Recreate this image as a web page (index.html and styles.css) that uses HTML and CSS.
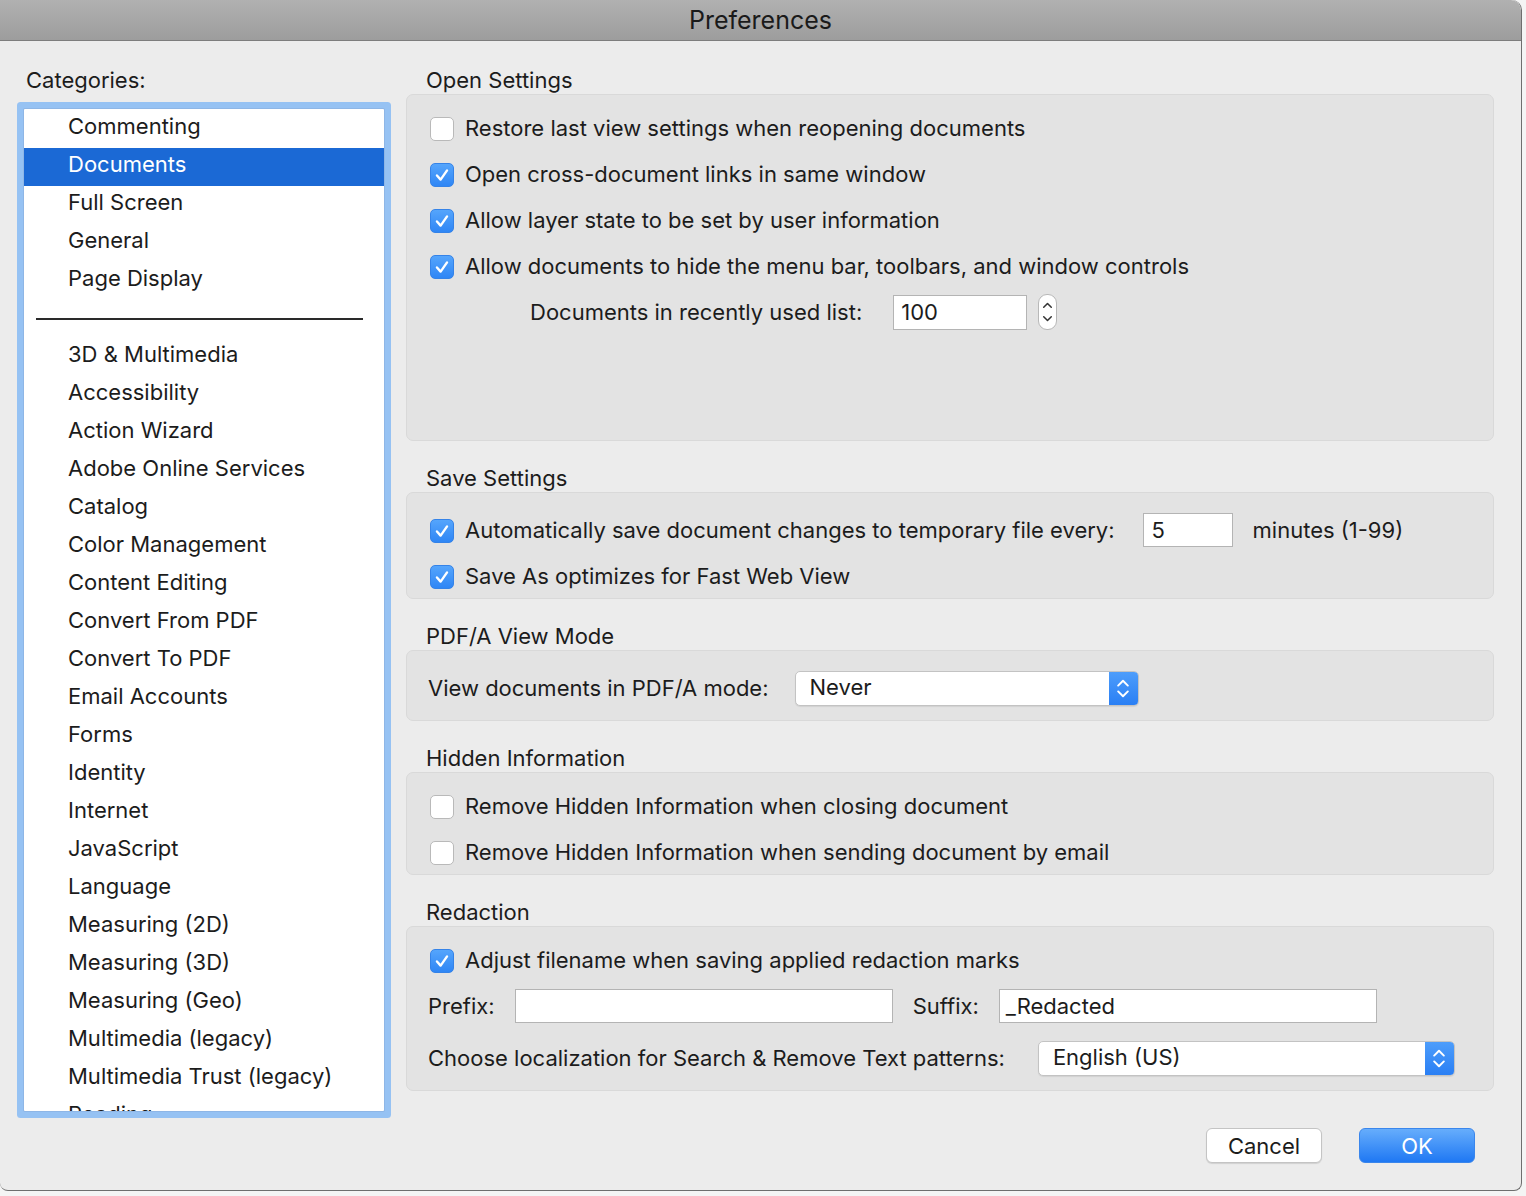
FILE: index.html
```html
<!DOCTYPE html>
<html>
<head>
<meta charset="utf-8">
<link rel="stylesheet" href="styles.css">
</head>
<body>
<div class="window">
  <div class="titlebar">Preferences</div>
  <div class="content">
    <div class="sidebar">
      <div class="label">Categories:</div>
      <div class="list">
        <div class="item">Commenting</div>
        <div class="item selected">Documents</div>
        <div class="item">Full Screen</div>
        <div class="item">General</div>
        <div class="item">Page Display</div>
        <div class="sep"><div class="sep-line"></div></div>
        <div class="item">3D &amp; Multimedia</div>
        <div class="item">Accessibility</div>
        <div class="item">Action Wizard</div>
        <div class="item">Adobe Online Services</div>
        <div class="item">Catalog</div>
        <div class="item">Color Management</div>
        <div class="item">Content Editing</div>
        <div class="item">Convert From PDF</div>
        <div class="item">Convert To PDF</div>
        <div class="item">Email Accounts</div>
        <div class="item">Forms</div>
        <div class="item">Identity</div>
        <div class="item">Internet</div>
        <div class="item">JavaScript</div>
        <div class="item">Language</div>
        <div class="item">Measuring (2D)</div>
        <div class="item">Measuring (3D)</div>
        <div class="item">Measuring (Geo)</div>
        <div class="item">Multimedia (legacy)</div>
        <div class="item">Multimedia Trust (legacy)</div>
        <div class="item">Reading</div>
      </div>
    </div>
    <div class="main">
      <div class="section-title">Open Settings</div>
      <div class="group g-open">
        <div class="row"><span class="cb"></span>Restore last view settings when reopening documents</div>
        <div class="row"><span class="cb on"><svg viewBox="0 0 24 24"><path d="M6.5 12.5l4 4.5 7-10"/></svg></span>Open cross-document links in same window</div>
        <div class="row"><span class="cb on"><svg viewBox="0 0 24 24"><path d="M6.5 12.5l4 4.5 7-10"/></svg></span>Allow layer state to be set by user information</div>
        <div class="row"><span class="cb on"><svg viewBox="0 0 24 24"><path d="M6.5 12.5l4 4.5 7-10"/></svg></span>Allow documents to hide the menu bar, toolbars, and window controls</div>
        <div class="row recent">
          <span class="recent-label">Documents in recently used list:</span>
          <span class="field f-recent">100</span>
          <span class="stepper"><svg viewBox="0 0 18 36"><path d="M5 13l4-4 4 4M5 23l4 4 4-4"/></svg></span>
        </div>
      </div>

      <div class="section-title">Save Settings</div>
      <div class="group g-save">
        <div class="row"><span class="cb on"><svg viewBox="0 0 24 24"><path d="M6.5 12.5l4 4.5 7-10"/></svg></span>Automatically save document changes to temporary file every:<span class="field f-min">5</span><span class="minutes">minutes (1-99)</span></div>
        <div class="row"><span class="cb on"><svg viewBox="0 0 24 24"><path d="M6.5 12.5l4 4.5 7-10"/></svg></span>Save As optimizes for Fast Web View</div>
      </div>

      <div class="section-title">PDF/A View Mode</div>
      <div class="group g-pdfa">
        <div class="row plain">View documents in PDF/A mode:<span class="select s-never"><span class="sel-text">Never</span><span class="sel-arrow"><svg viewBox="0 0 28 34"><path d="M9 14l5-5 5 5M9 20l5 5 5-5"/></svg></span></span></div>
      </div>

      <div class="section-title">Hidden Information</div>
      <div class="group g-hidden">
        <div class="row"><span class="cb"></span>Remove Hidden Information when closing document</div>
        <div class="row"><span class="cb"></span>Remove Hidden Information when sending document by email</div>
      </div>

      <div class="section-title">Redaction</div>
      <div class="group g-red">
        <div class="row"><span class="cb on"><svg viewBox="0 0 24 24"><path d="M6.5 12.5l4 4.5 7-10"/></svg></span>Adjust filename when saving applied redaction marks</div>
        <div class="row plain">Prefix:<span class="field f-prefix"></span><span class="suffix-label">Suffix:</span><span class="field f-suffix">_Redacted</span></div>
        <div class="row plain tall">Choose localization for Search &amp; Remove Text patterns:<span class="select s-lang"><span class="sel-text">English (US)</span><span class="sel-arrow"><svg viewBox="0 0 28 34"><path d="M9 14l5-5 5 5M9 20l5 5 5-5"/></svg></span></span></div>
      </div>

      <div class="buttons">
        <span class="btn cancel">Cancel</span>
        <span class="btn ok">OK</span>
      </div>
    </div>
  </div>
</div>
</body>
</html>
```
FILE: styles.css
```css
html, body {
  margin: 0;
  padding: 0;
}
body {
  background: #f4f4f4;
  font-family: Inter, "Liberation Sans", sans-serif;
  font-size: 22px;
  color: #1c1c1c;
  width: 1526px;
  height: 1196px;
  overflow: hidden;
}
.window {
  width: 1522px;
  height: 1191px;
  background: #ececec;
  border-right: 1px solid #6e6e6e;
  border-bottom: 1px solid #6e6e6e;
  border-radius: 0 10px 8px 8px;
  box-sizing: border-box;
  overflow: hidden;
}
.titlebar {
  height: 41px;
  line-height: 41px;
  text-align: center;
  font-size: 25px;
  color: #1a1a1a;
  background: linear-gradient(#b1b1b1, #9d9d9d);
  border-bottom: 1px solid #7d7d7d;
  box-sizing: border-box;
  border-radius: 0 10px 0 0;
}
.content {
  display: flex;
  padding: 25px 0 0 24px;
}
.sidebar {
  width: 360px;
}
.label {
  height: 28px;
  line-height: 28px;
  margin-left: 2px;
}
.list {
  margin-top: 15px;
  height: 1002px;
  background: #fff;
  box-shadow: 0 0 0 1px #8eb6e6, 0 0 0 7px #96c2f3;
  border-radius: 1px;
  overflow: hidden;
  padding-top: 1px;
  box-sizing: border-box;
}
.item {
  height: 38px;
  line-height: 33px;
  padding-left: 44px;
  white-space: nowrap;
}
.item.selected {
  background: #1b69d5;
  color: #fff;
}
.sep {
  height: 38px;
  padding-top: 18px;
  box-sizing: border-box;
}
.sep-line {
  margin-left: 12px;
  width: 327px;
  height: 2px;
  background: #2a2a2a;
}
.main {
  margin-left: 22px;
  width: 1088px;
}
.section-title {
  height: 28px;
  line-height: 28px;
  padding-left: 20px;
  margin-top: 23px;
}
.main > .section-title:first-child {
  margin-top: 0;
}
.group {
  background: #e3e3e3;
  border: 1px solid #d9d9d9;
  border-radius: 7px;
  box-sizing: border-box;
  padding-left: 23px;
}
.g-open { height: 347px; padding-top: 10px; }
.g-save { height: 107px; padding-top: 14px; }
.g-pdfa { height: 71px; padding-top: 14px; }
.g-hidden { height: 103px; padding-top: 10px; }
.g-red { height: 165px; padding-top: 10px; }
.row {
  height: 46px;
  display: flex;
  align-items: center;
  white-space: nowrap;
}
.row.plain {
  margin-left: -2px;
}
.row.tall {
  height: 58px;
}
.cb {
  width: 24px;
  height: 24px;
  border-radius: 5px;
  box-sizing: border-box;
  background: #fff;
  border: 1px solid #b9b9b9;
  margin-right: 11px;
  flex: none;
  display: flex;
  position: relative;
  top: 1px;
}
.cb.on {
  background: linear-gradient(#55a5fc, #2f86f5);
  border: 1px solid #3583e8;
}
.cb svg {
  width: 22px;
  height: 22px;
  fill: none;
  stroke: #fff;
  stroke-width: 2.6;
  stroke-linecap: round;
  stroke-linejoin: round;
}
.recent-label {
  margin-left: 100px;
}
.field {
  background: #fff;
  border: 1px solid #b4b4b4;
  box-sizing: border-box;
  height: 35px;
  line-height: 33px;
  padding-left: 7px;
  display: inline-block;
}
.f-recent {
  width: 134px;
  margin-left: 31px;
}
.stepper {
  width: 19px;
  height: 36px;
  margin-left: 11px;
  background: #fff;
  border: 1px solid #b8b8b8;
  border-radius: 9px;
  box-sizing: border-box;
  display: flex;
}
.stepper svg {
  width: 17px;
  height: 34px;
  fill: none;
  stroke: #333;
  stroke-width: 1.6;
  stroke-linecap: round;
  stroke-linejoin: round;
}
.f-min {
  width: 90px;
  height: 34px;
  margin-left: 28px;
  padding-left: 8px;
}
.minutes {
  margin-left: 20px;
}
.select {
  display: flex;
  height: 35px;
  background: #fff;
  border: 1px solid #c3c3c3;
  border-radius: 5px;
  box-sizing: border-box;
  overflow: hidden;
  box-shadow: 0 1px 1px rgba(0,0,0,0.08);
}
.sel-text {
  flex: 1;
  padding-left: 14px;
  line-height: 31px;
}
.sel-arrow {
  width: 29px;
  background: linear-gradient(#4d9dfb, #2a7ff4);
  display: flex;
}
.sel-arrow svg {
  width: 28px;
  height: 33px;
  fill: none;
  stroke: #fff;
  stroke-width: 2;
  stroke-linecap: round;
  stroke-linejoin: round;
}
.s-never {
  width: 344px;
  margin-left: 26px;
}
.s-lang {
  width: 417px;
  margin-left: 33px;
}
.f-prefix {
  width: 378px;
  height: 34px;
  margin-left: 20px;
}
.suffix-label {
  margin-left: 20px;
}
.f-suffix {
  width: 378px;
  height: 34px;
  margin-left: 20px;
  padding-left: 6px;
}
.buttons {
  display: flex;
  justify-content: flex-end;
  gap: 37px;
  margin-top: 37px;
  padding-right: 19px;
}
.btn {
  width: 116px;
  height: 35px;
  line-height: 34px;
  text-align: center;
  border-radius: 6px;
  box-sizing: border-box;
}
.cancel {
  background: #fff;
  border: 1px solid #c4c4c4;
  box-shadow: 0 1px 1px rgba(0,0,0,0.12);
}
.ok {
  background: linear-gradient(#66adfc, #1f78f3);
  color: #fff;
  border: 1px solid #3a86ec;
}
```
